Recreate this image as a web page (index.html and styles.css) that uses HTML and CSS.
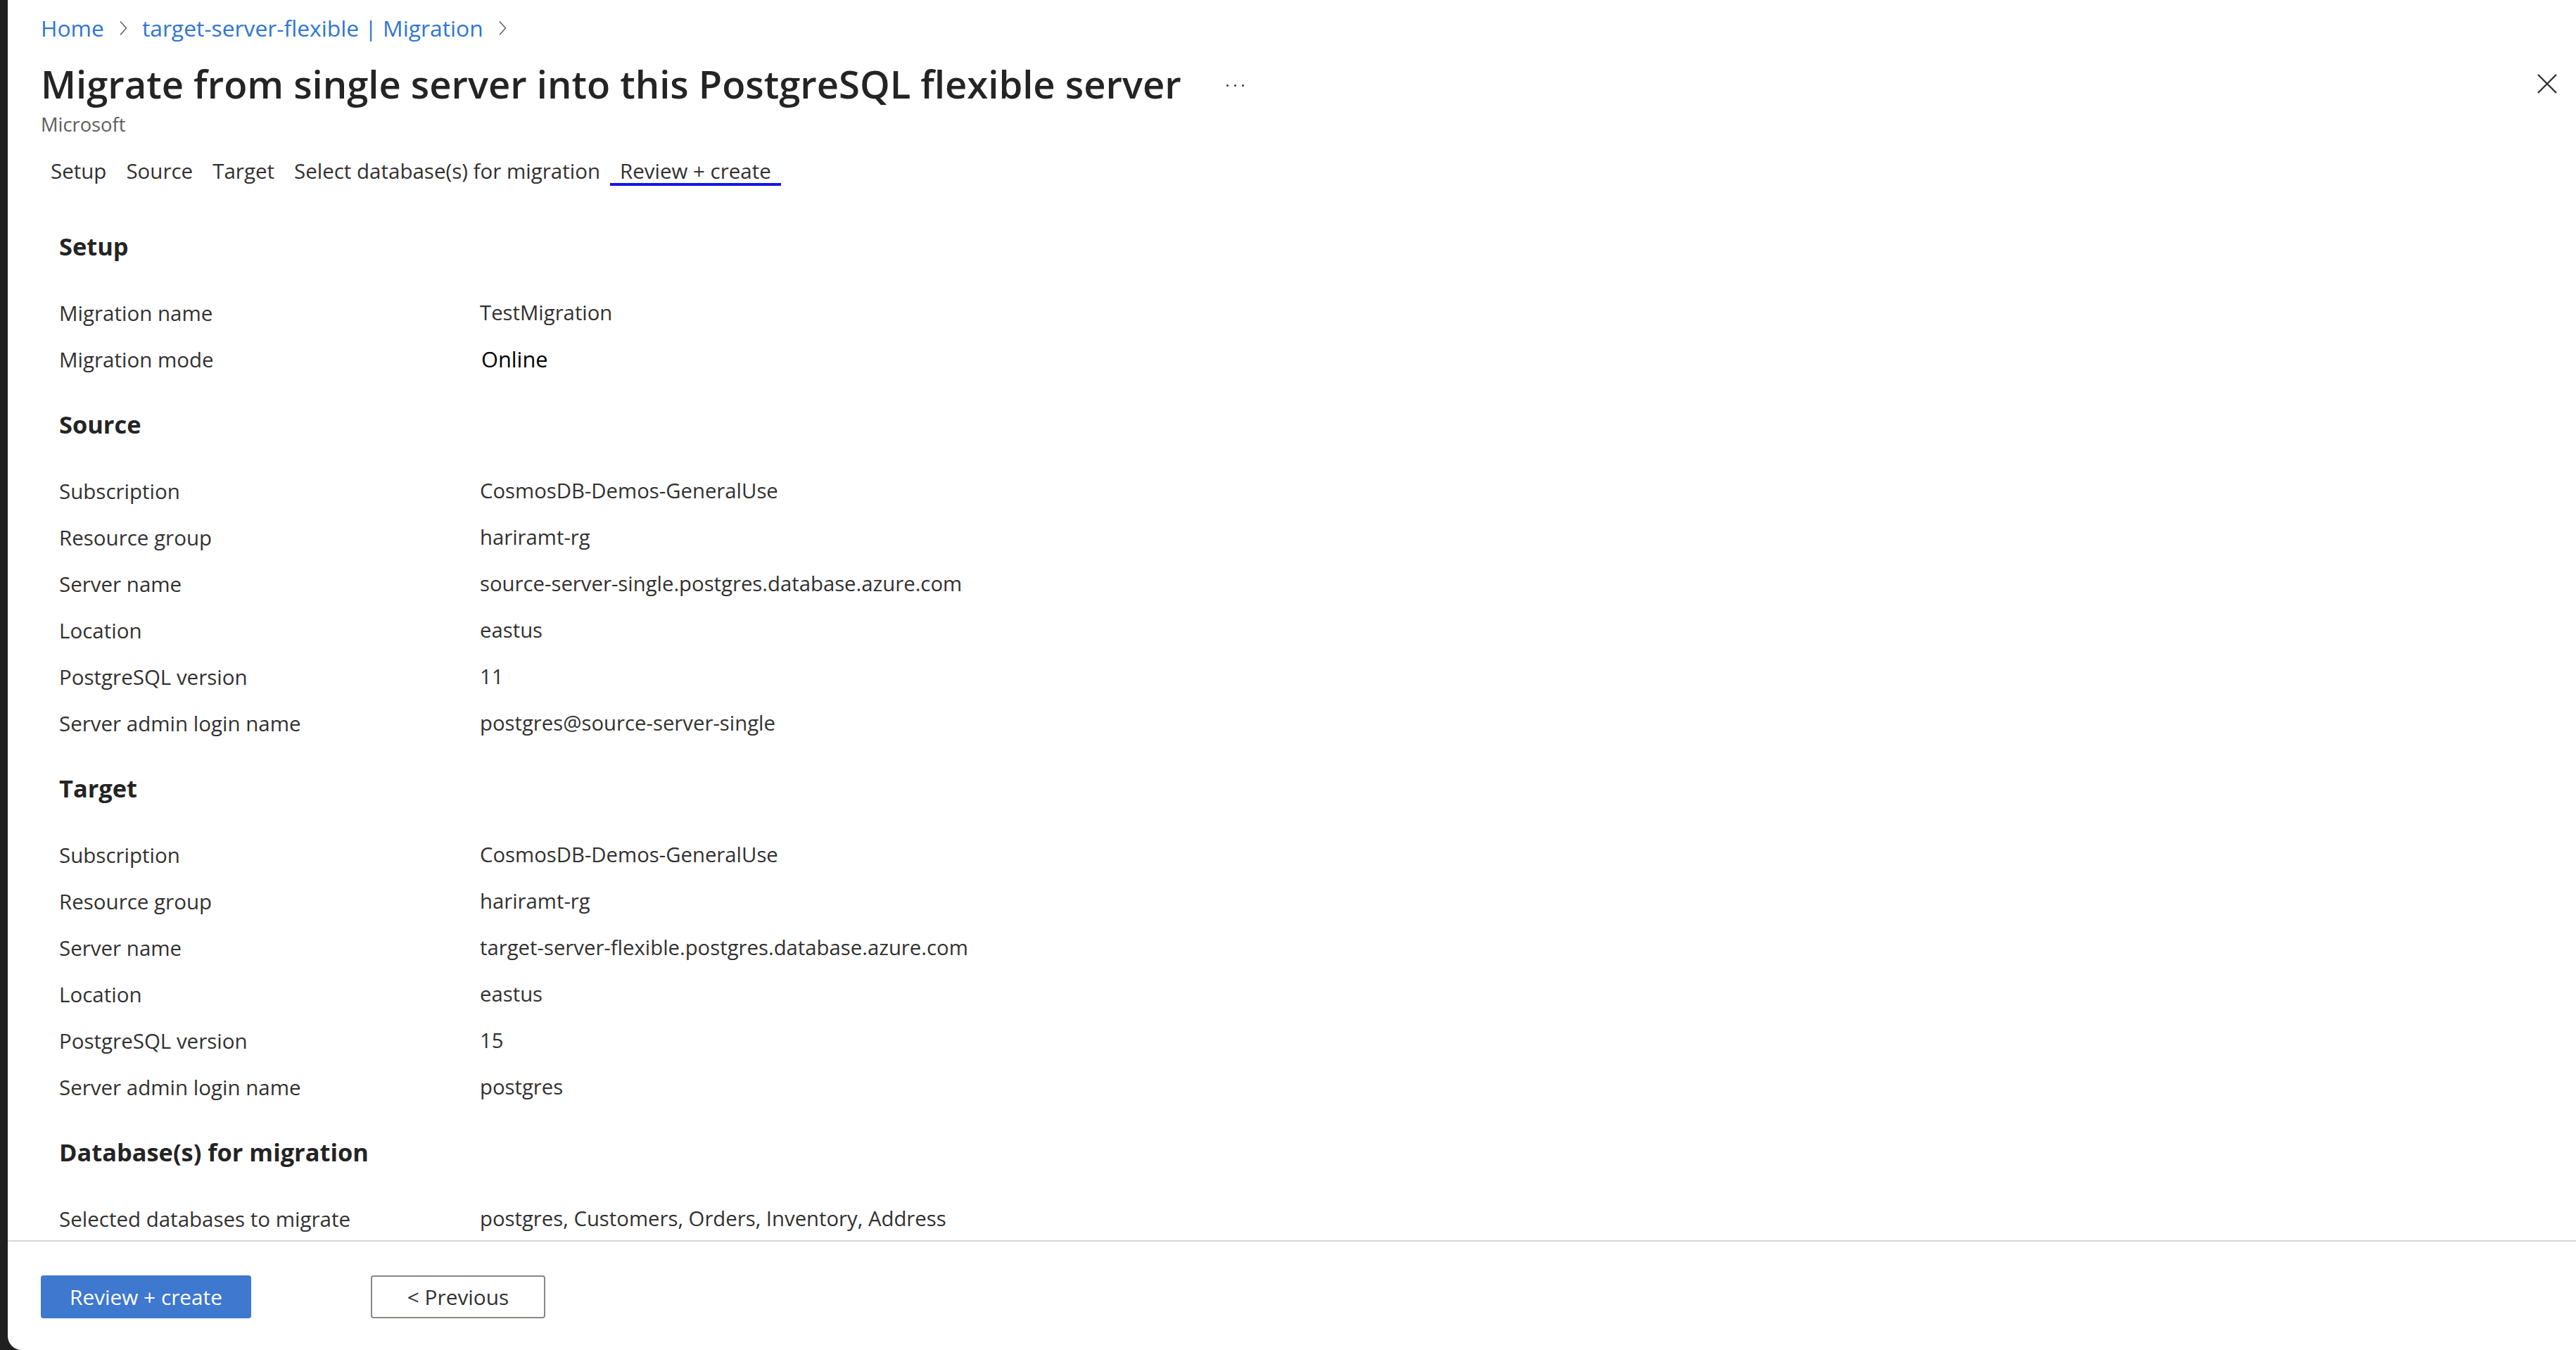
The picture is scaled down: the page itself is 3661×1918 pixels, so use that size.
FILE: index.html
```html
<!DOCTYPE html>
<html lang="en">
<head>
<meta charset="utf-8">
<title>Migrate from single server into this PostgreSQL flexible server</title>
<link rel="stylesheet" href="styles.css">
</head>
<body>
<div class="panel">
  <header class="header">
    <nav class="crumbs">
      <a class="crumb">Home</a>
      <svg class="chev" viewBox="0 0 14 22" width="14" height="22"><path d="M3 1.5 L11.5 11 L3 20.5" fill="none" stroke="#605e5c" stroke-width="1.5"/></svg>
      <a class="crumb">target-server-flexible | Migration</a>
      <svg class="chev" viewBox="0 0 14 22" width="14" height="22"><path d="M3 1.5 L11.5 11 L3 20.5" fill="none" stroke="#605e5c" stroke-width="1.5"/></svg>
    </nav>
    <div class="title-row">
      <h1 class="title">Migrate from single server into this PostgreSQL flexible server</h1>
      <span class="more"><i></i><i></i><i></i></span>
      <svg class="close" viewBox="0 0 28 28" width="28" height="28"><path d="M1 1 L27 27 M27 1 L1 27" stroke="#323130" stroke-width="2.4" fill="none"/></svg>
    </div>
    <div class="publisher">Microsoft</div>
    <div class="tabs">
      <span class="tab">Setup</span>
      <span class="tab">Source</span>
      <span class="tab">Target</span>
      <span class="tab">Select database(s) for migration</span>
      <span class="tab active">Review + create</span>
    </div>
  </header>

  <main class="content">
    <section class="section">
      <h2 class="heading">Setup</h2>
      <div class="row"><span class="label">Migration name</span><span class="value">TestMigration</span></div>
      <div class="row"><span class="label">Migration mode</span><span class="value strong">Online</span></div>
    </section>
    <section class="section">
      <h2 class="heading">Source</h2>
      <div class="row"><span class="label">Subscription</span><span class="value">CosmosDB-Demos-GeneralUse</span></div>
      <div class="row"><span class="label">Resource group</span><span class="value">hariramt-rg</span></div>
      <div class="row"><span class="label">Server name</span><span class="value">source-server-single.postgres.database.azure.com</span></div>
      <div class="row"><span class="label">Location</span><span class="value">eastus</span></div>
      <div class="row"><span class="label">PostgreSQL version</span><span class="value">11</span></div>
      <div class="row"><span class="label">Server admin login name</span><span class="value">postgres@source-server-single</span></div>
    </section>
    <section class="section">
      <h2 class="heading">Target</h2>
      <div class="row"><span class="label">Subscription</span><span class="value">CosmosDB-Demos-GeneralUse</span></div>
      <div class="row"><span class="label">Resource group</span><span class="value">hariramt-rg</span></div>
      <div class="row"><span class="label">Server name</span><span class="value">target-server-flexible.postgres.database.azure.com</span></div>
      <div class="row"><span class="label">Location</span><span class="value">eastus</span></div>
      <div class="row"><span class="label">PostgreSQL version</span><span class="value">15</span></div>
      <div class="row"><span class="label">Server admin login name</span><span class="value">postgres</span></div>
    </section>
    <section class="section">
      <h2 class="heading">Database(s) for migration</h2>
      <div class="row"><span class="label">Selected databases to migrate</span><span class="value">postgres, Customers, Orders, Inventory, Address</span></div>
    </section>
  </main>

  <footer class="footer">
    <button class="btn primary">Review + create</button>
    <button class="btn secondary">&lt; Previous</button>
  </footer>
</div>
</body>
</html>
```
FILE: styles.css
```css
* { box-sizing: border-box; }
html, body { margin: 0; padding: 0; }
body {
  background: #202020;
  font-family: "Open Sans", "Noto Sans", sans-serif;
  color: #323130;
  height: 1918px;
  overflow: hidden;
}
.panel {
  margin-left: 11px;
  height: 1918px;
  background: #ffffff;
  border-bottom-left-radius: 20px;
  display: flex;
  flex-direction: column;
}
.header { padding-left: 47px; padding-right: 27px; }
.crumbs {
  display: flex;
  align-items: center;
  gap: 20px;
  padding-top: 18px;
  height: 62px;
  font-size: 31.8px;
  line-height: 44px;
}
.crumb { color: #2f76d2; text-decoration: none; }
.chev { display: block; }
.title-row {
  display: flex;
  align-items: center;
  margin-top: 21px;
  height: 72px;
}
.title {
  margin: 0;
  font-size: 54.3px;
  font-weight: 600;
  line-height: 72px;
  color: #242424;
  white-space: nowrap;
}
.more {
  display: flex;
  gap: 8px;
  margin-left: 64px;
  margin-top: 4px;
}
.more i { display: block; width: 3px; height: 3px; background: #323130; border-radius: 50%; }
.close { margin-left: auto; display: block; }
.publisher {
  margin-top: 2px;
  font-size: 27.3px;
  line-height: 40px;
  color: #605e5c;
}
.tabs {
  display: flex;
  margin-top: 29px;
  margin-left: 0;
}
.tab {
  padding: 0 14px;
  font-size: 29.5px;
  line-height: 34px;
  border-bottom: 4px solid transparent;
  color: #323130;
}
.tab.active { border-bottom-color: #1515e6; }

.content {
  flex: 1;
  overflow: hidden;
  padding-left: 73px;
  padding-top: 61px;
}
.section { margin-bottom: 35px; }
.heading {
  margin: 0 0 36px 0;
  font-size: 34.4px;
  font-weight: 700;
  line-height: 50px;
  color: #242424;
}
.row {
  display: flex;
  align-items: center;
  height: 66px;
  font-size: 29.3px;
}
.label { width: 598px; flex: none; color: #323130; font-size: 29.5px; }
.value { color: #323130; }
.value.strong { color: #000; font-size: 30.8px; padding-left: 2px; }

.footer {
  border-top: 2px solid #d6d6d6;
  height: 156px;
  flex: none;
  padding: 48px 0 0 47px;
  display: flex;
  align-items: flex-start;
  gap: 170px;
}
.btn {
  font-family: inherit;
  font-size: 29.8px;
  height: 61px;
  border-radius: 4px;
  cursor: pointer;
}
.btn.primary {
  width: 299px;
  background: #3e78cf;
  color: #fff;
  border: none;
}
.btn.secondary {
  width: 248px;
  background: #fff;
  color: #323130;
  border: 2px solid #8a8886;
}
```
